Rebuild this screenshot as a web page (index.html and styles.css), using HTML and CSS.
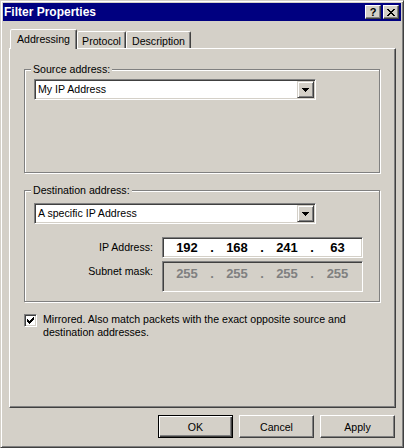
FILE: index.html
```html
<!DOCTYPE html>
<html>
<head>
<meta charset="utf-8">
<title>Filter Properties</title>
<link rel="stylesheet" href="styles.css">
</head>
<body>
<div class="window">
  <div class="titlebar">
    <span class="title">Filter Properties</span>
    <div class="caption-btns">
      <span class="cap cap-help">?</span>
      <span class="cap"><svg width="8" height="7" viewBox="0 0 8 7" shape-rendering="crispEdges"><path d="M0 0h2v1H0zM6 0h2v1H6zM1 1h2v1H1zM5 1h2v1H5zM2 2h4v1H2zM3 3h2v1H3zM2 4h4v1H2zM1 5h2v1H1zM5 5h2v1H5zM0 6h2v1H0zM6 6h2v1H6z" fill="#000"/></svg></span>
    </div>
  </div>
  <div class="content">
    <div class="tabs">
      <div class="tab active">Addressing</div>
      <div class="tab tab-protocol">Protocol</div>
      <div class="tab tab-desc">Description</div>
    </div>
    <div class="panel">
      <fieldset class="group">
        <legend>Source address:</legend>
        <div class="group-body src-body">
          <div class="combo">
            <span class="combo-text">My IP Address</span>
            <span class="drop"><svg width="7" height="4" viewBox="0 0 7 4" shape-rendering="crispEdges"><path d="M0 0h7v1H0zM1 1h5v1H1zM2 2h3v1H2zM3 3h1v1H3z" fill="#000"/></svg></span>
          </div>
        </div>
      </fieldset>
      <fieldset class="group dst">
        <legend>Destination address:</legend>
        <div class="group-body dst-body">
          <div class="combo">
            <span class="combo-text">A specific IP Address</span>
            <span class="drop"><svg width="7" height="4" viewBox="0 0 7 4" shape-rendering="crispEdges"><path d="M0 0h7v1H0zM1 1h5v1H1zM2 2h3v1H2zM3 3h1v1H3z" fill="#000"/></svg></span>
          </div>
          <div class="field-row first">
            <span class="field-label">IP Address:</span>
            <div class="ip">
              <span class="oct">192</span><span class="dot">.</span><span class="oct">168</span><span class="dot">.</span><span class="oct">241</span><span class="dot">.</span><span class="oct last">63</span>
            </div>
          </div>
          <div class="field-row second">
            <span class="field-label">Subnet mask:</span>
            <div class="ip disabled">
              <span class="oct">255</span><span class="dot">.</span><span class="oct">255</span><span class="dot">.</span><span class="oct">255</span><span class="dot">.</span><span class="oct last">255</span>
            </div>
          </div>
        </div>
      </fieldset>
      <div class="check-row">
        <span class="checkbox"><svg width="7" height="7" viewBox="0 0 7 7" shape-rendering="crispEdges"><path d="M0 2h1v3H0zM1 3h1v3H1zM2 4h1v3H2zM3 3h1v3H3zM4 2h1v3H4zM5 1h1v3H5zM6 0h1v3H6z" fill="#000"/></svg></span>
        <span class="check-text">Mirrored. Also match packets with the exact opposite source and destination addresses.</span>
      </div>
    </div>
    <div class="buttons">
      <button class="btn default">OK</button>
      <button class="btn">Cancel</button>
      <button class="btn">Apply</button>
    </div>
  </div>
</div>
</body>
</html>
```

FILE: styles.css
```css
html, body {
  margin: 0;
  padding: 0;
}
body {
  font-family: "Liberation Sans", Arial, sans-serif;
  font-size: 10.6px;
  color: #000;
  background: #d4d0c8;
}
.window {
  width: 404px;
  height: 448px;
  box-sizing: border-box;
  background: #d4d0c8;
  border: 1px solid;
  border-color: #d4d0c8 #404040 #404040 #d4d0c8;
  box-shadow: inset 1px 1px #fff, inset -1px -1px #808080;
  padding: 2px;
  display: flex;
  flex-direction: column;
}
.titlebar {
  height: 18px;
  flex: none;
  background: #000080;
  color: #fff;
  display: flex;
  align-items: center;
  justify-content: space-between;
  padding: 0 2px 0 1px;
}
.title {
  font-weight: bold;
  font-size: 12px;
  line-height: 18px;
}
.caption-btns {
  display: flex;
  gap: 2px;
}
.cap {
  width: 16px;
  height: 14px;
  box-sizing: border-box;
  background: #d4d0c8;
  border: 1px solid;
  border-color: #fff #404040 #404040 #fff;
  box-shadow: inset -1px -1px #808080;
  display: flex;
  align-items: center;
  justify-content: center;
  color: #000;
}
.cap-help {
  font-weight: bold;
  font-size: 11px;
  line-height: 12px;
}
.content {
  flex: 1;
  padding: 8px 5px 0 6px;
  display: flex;
  flex-direction: column;
}
.tabs {
  display: flex;
  align-items: flex-end;
  height: 19px;
  padding-left: 1px;
}
.tab {
  box-sizing: border-box;
  height: 17px;
  border: 1px solid;
  border-bottom: none;
  border-color: #fff #404040 transparent #fff;
  box-shadow: inset -1px 0 #808080;
  border-radius: 2px 2px 0 0;
  background: #d4d0c8;
  display: flex;
  align-items: center;
  justify-content: center;
  padding-top: 1px;
}
.tab.active {
  width: 67px;
  height: 20px;
  margin-bottom: -1px;
  padding-top: 0;
  padding-bottom: 1px;
  position: relative;
  z-index: 1;
}
.tab-protocol {
  width: 49px;
}
.tab-desc {
  width: 65px;
}
.panel {
  width: 387px;
  height: 360px;
  box-sizing: border-box;
  border: 1px solid;
  border-color: #fff #404040 #404040 #fff;
  box-shadow: inset -1px -1px #808080;
  padding: 14px 0 0 14px;
}
.group {
  margin: 0;
  padding: 0;
  width: 356px;
  min-width: 0;
  box-sizing: border-box;
  border: 1px solid #808080;
  box-shadow: 1px 1px #fff, inset 1px 1px #fff;
}
.group legend {
  margin-left: 6px;
  padding: 0 2px;
  line-height: 13px;
  background: #d4d0c8;
}
.group.dst {
  margin-top: 11px;
}
.group-body {
  padding-left: 9px;
}
.src-body {
  padding-top: 3px;
  padding-bottom: 72px;
}
.dst-body {
  padding-top: 6px;
  padding-bottom: 9px;
}
.combo {
  display: flex;
  align-items: center;
  width: 282px;
  height: 21px;
  box-sizing: border-box;
  border: 1px solid;
  border-color: #808080 #fff #fff #808080;
  box-shadow: inset 1px 1px #404040, inset -1px -1px #d4d0c8;
  padding: 1px;
  background: #fff;
}
.combo-text {
  flex: 1;
  padding-left: 2px;
  line-height: 17px;
}
.drop {
  width: 17px;
  height: 17px;
  box-sizing: border-box;
  border: 1px solid;
  border-color: #d4d0c8 #404040 #404040 #d4d0c8;
  box-shadow: inset 1px 1px #fff, inset -1px -1px #808080;
  background: #d4d0c8;
  display: flex;
  align-items: center;
  justify-content: center;
}
.field-row {
  display: flex;
  align-items: flex-start;
}
.field-row.first {
  margin-top: 13px;
}
.field-row.second {
  margin-top: 3px;
}
.field-label {
  width: 119px;
  margin-right: 9px;
  text-align: right;
  line-height: 21px;
}
.ip {
  display: flex;
  width: 201px;
  height: 21px;
  box-sizing: border-box;
  border: 1px solid;
  border-color: #808080 #fff #fff #808080;
  box-shadow: inset 1px 1px #404040, inset -1px -1px #d4d0c8;
  padding: 1px;
  background: #fff;
  font-weight: bold;
  font-size: 13px;
  line-height: 17px;
}
.ip.disabled {
  height: 31px;
  padding-top: 3px;
  background: #d4d0c8;
  color: #808080;
}
.oct {
  width: 46px;
  text-align: center;
}
.oct.last {
  width: 47px;
}
.dot {
  width: 4px;
  text-align: center;
}
.check-row {
  display: flex;
  align-items: flex-start;
  margin-top: 11px;
}
.checkbox {
  margin-top: 1px;
  width: 13px;
  height: 13px;
  box-sizing: border-box;
  border: 1px solid;
  border-color: #808080 #fff #fff #808080;
  box-shadow: inset 1px 1px #404040, inset -1px -1px #d4d0c8;
  background: #fff;
  display: flex;
  align-items: center;
  justify-content: center;
  flex: none;
}
.check-text {
  margin-left: 6px;
  width: 335px;
  line-height: 13px;
}
.buttons {
  display: flex;
  justify-content: flex-end;
  gap: 6px;
  margin-top: 7px;
  padding-right: 1px;
}
.btn {
  width: 75px;
  height: 23px;
  box-sizing: border-box;
  padding: 0;
  margin: 0;
  font: inherit;
  color: #000;
  background: #d4d0c8;
  border: 1px solid;
  border-color: #fff #404040 #404040 #fff;
  box-shadow: inset -1px -1px #808080;
  border-radius: 0;
}
.btn.default {
  border-color: #000;
  box-shadow: inset 1px 1px #fff, inset -1px -1px #404040, inset -2px -2px #808080;
}
```
